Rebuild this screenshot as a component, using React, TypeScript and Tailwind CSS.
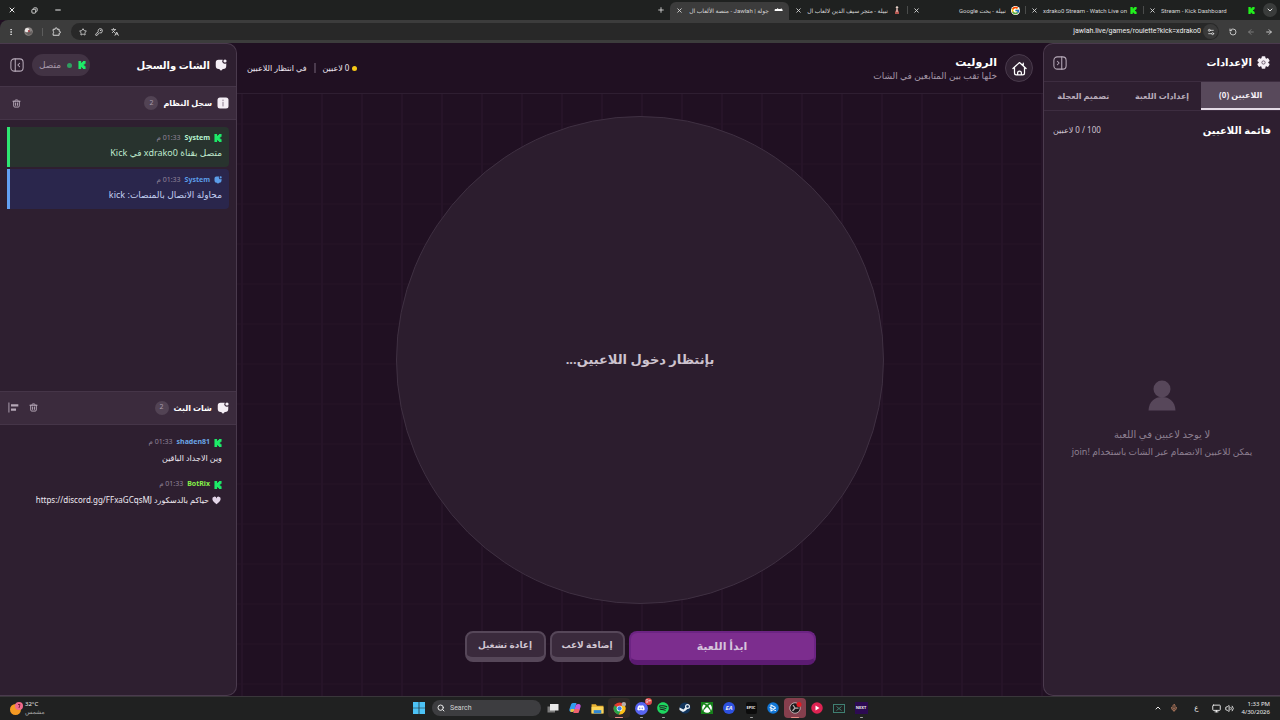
import type { ReactNode } from "react";
import {
  ArrowLeft,
  ArrowRight,
  ChevronDown,
  ChevronUp,
  EllipsisVertical,
  KeyRound,
  Languages,
  Mic,
  Minus,
  Monitor,
  Plus,
  RotateCcw,
  Search,
  Settings2,
  Star,
  Volume2,
  X,
} from "lucide-react";
import { FaDiscord, FaSpotify, FaXbox } from "react-icons/fa";
import { FcGoogle } from "react-icons/fc";

function KickLogo({ className }: { className: string }) {
  return (
    <svg viewBox="0 0 24 24" className={className} fill="currentColor" aria-hidden="true">
      <path d="M1.333 0h8v5.333H12V2.667h2.667V0h8v8H20v2.667h-2.667v2.666H20V16h2.667v8h-8v-2.667H12v-2.666H9.333V24h-8Z" />
    </svg>
  );
}

function ChatIcon({ className }: { className: string }) {
  return (
    <svg viewBox="0 0 24 24" className={className} fill="currentColor" aria-hidden="true">
      <path d="M7 1.500h8.500a5 5 0 0 0 7 7V14a6 6 0 0 1-6 6h-.8L12 23.500 8.300 20H7.500a6 6 0 0 1-6-6V7a5.500 5.500 0 0 1 5.500-5.500Z" />
      <circle cx="20" cy="4" r="3.200" />
    </svg>
  );
}

function InfoIcon({ className }: { className: string }) {
  return (
    <svg viewBox="0 0 24 24" className={className} aria-hidden="true">
      <rect x="1" y="1" width="22" height="22" rx="5" fill="#f4eef5" />
      <path d="M12 10.500v7.500" stroke="#8d7f90" strokeWidth="2" strokeLinecap="round" />
      <circle cx="12" cy="6.500" r="1.400" fill="#8d7f90" />
    </svg>
  );
}

function TrashIcon({ className }: { className: string }) {
  return (
    <svg viewBox="0 0 24 24" className={className} fill="none" stroke="currentColor" strokeWidth="2.600" strokeLinejoin="round" strokeLinecap="round" aria-hidden="true">
      <path d="M2.500 6h19M8 6V4.500A2 2 0 0 1 10 2.500h4A2 2 0 0 1 16 4.500V6M4.500 6v12.500a3 3 0 0 0 3 3h9a3 3 0 0 0 3-3V6M9.500 10.500v6.500M14.500 10.500v6.500" />
    </svg>
  );
}

function AlignIcon({ className }: { className: string }) {
  return (
    <svg viewBox="0 0 24 24" className={className} fill="currentColor" aria-hidden="true">
      <path d="M1 1h2v22H1zM6.500 5h16v5h-16zM6.500 14h11v5h-11z" />
    </svg>
  );
}

function PanelIcon({ className, flipped }: { className: string; flipped?: boolean }) {
  return (
    <svg viewBox="0 0 24 24" className={className} fill="none" stroke="currentColor" strokeWidth="1.800" strokeLinecap="round" strokeLinejoin="round" aria-hidden="true">
      <rect x="1.500" y="1.500" width="21" height="21" rx="6" />
      {flipped ? <path d="M15 1.500v21M7.500 9l3 3-3 3" /> : <path d="M9 1.500v21M16.500 9l-3 3 3 3" />}
    </svg>
  );
}

function GearIcon({ className }: { className: string }) {
  return (
    <svg viewBox="0 0 24 24" className={className} aria-hidden="true">
      <g fill="#f6f0f7">
        <circle cx="12" cy="12" r="8.800" />
        <rect x="8.500" y="0.500" width="7" height="23" rx="1.500" />
        <rect x="8.500" y="0.500" width="7" height="23" rx="1.500" transform="rotate(60 12 12)" />
        <rect x="8.500" y="0.500" width="7" height="23" rx="1.500" transform="rotate(120 12 12)" />
      </g>
      <circle cx="12" cy="12" r="3" fill="none" stroke="#6a5a6d" strokeWidth="1.800" />
    </svg>
  );
}

function HomeIcon({ className }: { className: string }) {
  return (
    <svg viewBox="0 0 24 24" className={className} fill="none" stroke="currentColor" strokeWidth="2" strokeLinecap="round" strokeLinejoin="round" aria-hidden="true">
      <path d="M1.500 12 12 2.500 22.500 12M18 7V3.500M4 10v9a3 3 0 0 0 3 3h10a3 3 0 0 0 3-3v-9M9 22v-3a3 3 0 0 1 6 0v3" />
    </svg>
  );
}

function PersonIcon({ className }: { className: string }) {
  return (
    <svg viewBox="0 0 28 30" className={className} fill="currentColor" aria-hidden="true">
      <circle cx="14" cy="8.500" r="8.500" />
      <path d="M0.500 30C1 21 6.500 16.500 14 16.500S27 21 27.500 30Z" />
    </svg>
  );
}

function RestoreIcon({ className }: { className: string }) {
  return (
    <svg viewBox="0 0 24 24" className={className} fill="none" stroke="currentColor" strokeWidth="3" aria-hidden="true">
      <rect x="3" y="8" width="13" height="13" rx="3" />
      <path d="M8 5.500A3 3 0 0 1 11 3h7a3 3 0 0 1 3 3v7a3 3 0 0 1-2.500 3" />
    </svg>
  );
}

function ExtensionIcon({ className }: { className: string }) {
  return (
    <svg viewBox="0 0 24 24" className={className} fill="none" stroke="currentColor" strokeWidth="2.600" strokeLinejoin="round" aria-hidden="true">
      <path d="M3 6h5.500V4.500a2.500 2.500 0 0 1 5 0V6H19v5.500h1a2.500 2.500 0 0 1 0 5h-1V22H3v-5.500a2.800 2.800 0 0 0 0-5Z" />
    </svg>
  );
}

function BrowserTab({ icon, title, ltr, active }: { icon: ReactNode; title: string; ltr?: boolean; active?: boolean }) {
  return (
    <div
      className={
        active
          ? "flex h-[18px] w-[119px] items-center gap-1 rounded-t-md bg-[#3c3c3c] pr-[6px] pl-1 pb-[2px]"
          : "flex h-[18px] w-[119px] items-center gap-1 pr-[6px] pl-1"
      }
    >
      <span className="flex w-[10px] shrink-0 justify-center">{icon}</span>
      <a
        href="#tab"
        dir={ltr ? "ltr" : "rtl"}
        className="min-w-0 flex-1 font-['Roboto','DejaVu_Sans',sans-serif] text-[6px] whitespace-nowrap text-[#d6d6d6]"
      >
        {title}
      </a>
      <button aria-label="إغلاق علامة التبويب" className="flex w-[10px] shrink-0 justify-center text-[#dcdcdc]">
        <X className="size-[7px]" strokeWidth={3} />
      </button>
    </div>
  );
}

function Divider() {
  return <span className="-mx-px h-2 w-px bg-[#4a4c4b]" />;
}

function TabStrip() {
  return (
    <div className="flex h-5 shrink-0 items-end justify-between bg-[#1f2120] pr-[3px]">
      <div className="flex items-end">
        <div className="flex h-5 items-center">
          <button aria-label="البحث في علامات التبويب" className="flex size-[14px] items-center justify-center rounded-full bg-[#3a3c3b]">
            <ChevronDown className="size-2 text-[#e4e4e4]" strokeWidth={3} />
          </button>
          <span className="w-px" />
          <BrowserTab ltr title="Stream - Kick Dashboard" icon={<KickLogo className="size-[7px] text-[#22f01d]" />} />
          <Divider />
          <BrowserTab ltr title="xdrako0 Stream - Watch Live on" icon={<KickLogo className="size-[7px] text-[#22f01d]" />} />
          <Divider />
          <BrowserTab title="نبيلة - بحث Google" icon={<FcGoogle className="size-[9px] rounded-full bg-white" />} />
          <Divider />
          <BrowserTab
            title="نبيلة - متجر سيف الدين لالعاب ال"
            icon={
              <svg viewBox="0 0 10 16" className="h-2 w-[6px]" aria-hidden="true">
                <circle cx="5" cy="3" r="2.500" fill="#e7d3c9" />
                <path d="M5 5 9 12v4H1v-4Z" fill="#b4564f" />
                <path d="M4 6h2v6H4z" fill="#f0e4df" />
              </svg>
            }
          />
        </div>
        <BrowserTab
          active
          title="جولة | Jawlah - منصة الألعاب ال"
          icon={
            <svg viewBox="0 0 18 8" className="h-1 w-[9px] text-white" fill="currentColor" aria-hidden="true">
              <path d="M1 5c0-2 1-3 3-3h2l1-2 2 2h4l2-2v2c2 0 3 2 2 4H2Z" />
            </svg>
          }
        />
        <button aria-label="علامة تبويب جديدة" className="flex h-5 w-[18px] items-center justify-center">
          <Plus className="size-2 text-[#e0e0e0]" strokeWidth={2.500} />
        </button>
      </div>
      <div className="flex h-5 items-center text-[#ececec]">
        <button aria-label="تصغير" className="flex w-[23px] justify-center">
          <Minus className="size-2" strokeWidth={3} />
        </button>
        <button aria-label="استعادة" className="flex w-[23px] justify-center">
          <RestoreIcon className="size-[7px]" />
        </button>
        <button aria-label="إغلاق" className="flex w-[23px] justify-center">
          <X className="size-2" strokeWidth={3} />
        </button>
      </div>
    </div>
  );
}

function Toolbar() {
  return (
    <div className="flex h-[23px] shrink-0 items-center gap-[10px] rounded-tl-lg bg-[#3c3c3c] px-[7px] text-[#dcdcdc]">
      <button aria-label="السابق" className="shrink-0">
        <ArrowRight className="size-2" strokeWidth={2.500} />
      </button>
      <button aria-label="التالي" className="shrink-0 text-[#858585]">
        <ArrowLeft className="size-2" strokeWidth={2.500} />
      </button>
      <button aria-label="إعادة التحميل" className="shrink-0">
        <RotateCcw className="size-2" strokeWidth={2.500} />
      </button>
      <div className="flex h-[17px] min-w-0 flex-1 items-center gap-2 rounded-full bg-[#282828] pr-px pl-2">
        <div className="flex min-w-0 flex-1 items-center gap-[2px]">
          <button aria-label="معلومات الموقع" className="flex size-[15px] shrink-0 items-center justify-center rounded-full bg-[#3a3a3a]">
            <Settings2 className="size-2" strokeWidth={2.500} />
          </button>
          <input
            aria-label="العنوان"
            dir="ltr"
            defaultValue="jawlah.live/games/roulette?kick=xdrako0"
            className="min-w-0 flex-1 bg-transparent text-right font-['Roboto',sans-serif] text-[7px] text-[#eeeeee] outline-none"
          />
        </div>
        <button aria-label="ترجمة">
          <Languages className="size-2" strokeWidth={2.500} />
        </button>
        <button aria-label="كلمات المرور">
          <KeyRound className="size-2" strokeWidth={2.500} />
        </button>
        <button aria-label="إشارة مرجعية">
          <Star className="size-2" strokeWidth={2.500} />
        </button>
      </div>
      <div className="flex shrink-0 items-center gap-[9px]">
        <button aria-label="الإضافات">
          <ExtensionIcon className="size-[9px]" />
        </button>
        <span className="h-2 w-px bg-[#5c5c5c]" />
        <button aria-label="الملف الشخصي">
          <svg viewBox="0 0 20 20" className="size-[9px]" aria-hidden="true">
            <circle cx="10" cy="10" r="9.500" fill="#8b8584" />
            <circle cx="7" cy="7" r="5" fill="#ece8e6" />
            <circle cx="11" cy="9" r="2.500" fill="#a33f45" />
            <path d="M2 12 9 18 17 16 18 9 12 11Z" fill="#55504f" opacity="0.700" />
          </svg>
        </button>
        <button aria-label="القائمة">
          <EllipsisVertical className="size-2" strokeWidth={3} />
        </button>
      </div>
    </div>
  );
}

function SettingsPanel() {
  return (
    <aside className="flex w-[237px] shrink-0 flex-col rounded-l-[10px] border border-r-0 border-[#4a3a4d] bg-[#2e1f30]">
      <div className="flex h-[38px] shrink-0 items-center justify-between border-b border-[#3d2d40] pr-[10px] pl-[9px]">
        <h2 className="flex items-center gap-[5px] text-[10px] font-bold">
          <GearIcon className="size-[13px]" />
          الإعدادات
        </h2>
        <button aria-label="طي الإعدادات" className="text-[#b6a9b8]">
          <PanelIcon className="size-[14px]" flipped />
        </button>
      </div>
      <nav className="grid h-[29px] shrink-0 grid-cols-3 border-b border-[#3d2d40] text-[8px] font-bold text-[#b9adbb]">
        <button className="border-b-2 border-[#e4dbe6] bg-[#58495b] text-[#f4eff5]">اللاعبين (0)</button>
        <button>إعدادات اللعبة</button>
        <button>تصميم العجلة</button>
      </nav>
      <div className="flex h-[38px] shrink-0 items-center justify-between px-[9px]">
        <h3 className="text-[10px] font-bold">قائمة اللاعبين</h3>
        <span className="text-[8px] text-[#cfc5d1]">100 / 0 لاعبين</span>
      </div>
      <div className="flex flex-1 flex-col items-center justify-center pb-[6px] text-[#8d7f90]">
        <PersonIcon className="h-[31px] w-[28px] text-[#57475a]" />
        <p className="mt-4 text-[10px] leading-[14px]">لا يوجد لاعبين في اللعبة</p>
        <p className="mt-1 text-[9px] leading-[14px] whitespace-nowrap">يمكن للاعبين الانضمام عبر الشات باستخدام !join</p>
      </div>
    </aside>
  );
}

type ChatLine = { name: string; nameClass: string; icon: ReactNode; body: ReactNode; cardClass: string };

const kickBadge = <KickLogo className="size-2 text-[#1dea68]" />;

const systemLog: ChatLine[] = [
  {
    name: "System",
    nameClass: "font-bold text-[#b9f5d2]",
    icon: kickBadge,
    body: "متصل بقناة xdrako0 في Kick",
    cardClass: "rounded-r border-l-[3px] border-[#2fe673] bg-[#28332e] text-[9px] text-[#bfe9cd]",
  },
  {
    name: "System",
    nameClass: "font-bold text-[#5b9de8]",
    icon: <ChatIcon className="size-2 text-[#5b9de8]" />,
    body: "محاولة الاتصال بالمنصات: kick",
    cardClass: "rounded-r border-l-[3px] border-[#62a0f2] bg-[#2a264c] text-[9px] text-[#c3d0f2]",
  },
];

const streamChat: ChatLine[] = [
  {
    name: "shaden81",
    nameClass: "font-bold text-[#6ba6e6]",
    icon: kickBadge,
    body: "وين الاجداد الباقين",
    cardClass: "border-l-[3px] border-transparent text-[8px] text-[#f0eaf2]",
  },
  {
    name: "BotRix",
    nameClass: "font-bold text-[#86f04a]",
    icon: kickBadge,
    body: (
      <>
        <svg viewBox="0 0 24 22" className="mx-px ml-[3px] inline-block size-[9px] align-middle" fill="#e3d5e8" aria-label="قلب">
          <path d="M12 21C5 15 1 11.500 1 7a5.500 5.500 0 0 1 11-1.500A5.500 5.500 0 0 1 23 7c0 4.500-4 8-11 14Z" />
        </svg>
        حياكم بالدسكورد https://discord.gg/FFxaGCqsMJ
      </>
    ),
    cardClass: "border-l-[3px] border-transparent text-[8px] text-[#f0eaf2]",
  },
];

function ChatList({ lines }: { lines: ChatLine[] }) {
  return (
    <ul className="flex flex-1 flex-col gap-[2px] px-[7px] py-[7px]">
      {lines.map((line) => (
        <li key={line.nameClass} className={`h-10 px-[7px] pt-1 ${line.cardClass}`}>
          <div className="flex h-[14px] items-center gap-1 text-[7px]">
            {line.icon}
            <span className={line.nameClass}>{line.name}</span>
            <time className="text-[#92859a]">01:33 م</time>
          </div>
          <p className="leading-[15px] whitespace-nowrap">{line.body}</p>
        </li>
      ))}
    </ul>
  );
}

function SectionBar({ icon, title, children }: { icon: ReactNode; title: string; children: ReactNode }) {
  return (
    <div className="flex h-[34px] shrink-0 items-center justify-between border-y border-[#453548] bg-[#3b2b3d] pr-[7px] pl-2">
      <h3 className="flex items-center gap-[5px] text-[8px] font-bold">
        {icon}
        {title}
        <span className="flex size-[14px] items-center justify-center rounded-full bg-[#524354] text-[7px] font-normal text-[#a99bac]">
          2
        </span>
      </h3>
      <div className="flex items-center gap-[10px] text-[#b5a8b7]">{children}</div>
    </div>
  );
}

function ChatPanel() {
  return (
    <aside className="flex w-[237px] shrink-0 flex-col rounded-r-[10px] border border-l-0 border-[#4a3a4d] bg-[#2e1f30]">
      <div className="flex h-[42px] shrink-0 items-center justify-between pr-[9px] pl-[10px]">
        <h2 className="flex items-center gap-[5px] text-[10px] font-bold">
          <ChatIcon className="size-3 text-[#f4eef5]" />
          الشات والسجل
        </h2>
        <div className="flex items-center gap-2">
          <span className="flex h-[22px] items-center gap-[6px] rounded-full bg-[#423344] pr-1 pl-[7px] text-[9px] text-[#a698a9]">
            <KickLogo className="size-2 text-[#1dea68]" />
            <span className="size-[5px] rounded-full bg-[#2f9e60]" />
            متصل
          </span>
          <button aria-label="طي الشات" className="text-[#b6a9b8]">
            <PanelIcon className="size-[14px]" />
          </button>
        </div>
      </div>
      <section className="flex flex-1 flex-col">
        <SectionBar icon={<InfoIcon className="size-3" />} title="سجل النظام">
          <button aria-label="مسح سجل النظام" className="px-1">
            <TrashIcon className="size-[9px]" />
          </button>
        </SectionBar>
        <ChatList lines={systemLog} />
      </section>
      <section className="flex flex-1 flex-col">
        <SectionBar icon={<ChatIcon className="size-3 text-[#f4eef5]" />} title="شات البث">
          <button aria-label="مسح الشات">
            <TrashIcon className="size-[9px]" />
          </button>
          <button aria-label="محاذاة الشات">
            <AlignIcon className="size-[11px]" />
          </button>
        </SectionBar>
        <ChatList lines={streamChat} />
      </section>
    </aside>
  );
}

function GameStage() {
  return (
    <main className="flex min-w-0 flex-1 flex-col bg-[#201022]">
      <header className="flex h-[51px] shrink-0 items-center justify-between border-b border-[#2e1e31] px-[10px]">
        <div className="flex items-center gap-2">
          <a
            href="#home"
            aria-label="الرئيسية"
            className="flex size-7 items-center justify-center rounded-full border border-[#493a4c] bg-[#302132]"
          >
            <HomeIcon className="size-[15px]" />
          </a>
          <div>
            <h1 className="text-[11px] leading-[15px] font-bold">الروليت</h1>
            <p className="text-[9px] leading-[14px] text-[#a497a7]">خلها تقب بين المتابعين في الشات</p>
          </div>
        </div>
        <div className="flex items-center gap-[7px] text-[8px] text-[#eee6f0]">
          <span className="flex items-center gap-[3px]">
            <span className="size-[5px] rounded-full bg-[#f5c816]" />0 لاعبين
          </span>
          <span className="h-[10px] w-[2px] bg-[#4a3a4d]" />
          <span>في انتظار اللاعبين</span>
        </div>
      </header>
      <div className="flex flex-1 flex-col items-center bg-[linear-gradient(90deg,#261428_2px,transparent_2px),linear-gradient(#231224_2px,transparent_2px)] bg-size-[40px_40px] bg-position-[4px_29px] px-4 pt-[22px]">
        <div className="flex aspect-square w-[488px] max-w-full items-center justify-center rounded-full border border-[#3f3042] bg-[#2c1d2e]">
          <p className="text-[13px] font-bold text-[#cdc3cf]">بإنتظار دخول اللاعبين...</p>
        </div>
        <div className="mt-[27px] flex items-start gap-1 font-bold">
          <button className="h-[34px] w-[187px] rounded-lg border-2 border-b-[5px] border-[#6c2483] border-b-[#5c1b72] bg-[#7c2d8e] text-[11px] text-[#d6c4dc]">
            ابدأ اللعبة
          </button>
          <button className="h-[31px] w-[75px] rounded-lg border-2 border-b-[5px] border-[#564759] bg-[#3a2a3c] text-[9px] text-[#cfc5d1]">
            إضافة لاعب
          </button>
          <button className="h-[31px] w-[81px] rounded-lg border-2 border-b-[5px] border-[#564759] bg-[#3a2a3c] text-[9px] text-[#cfc5d1]">
            إعادة تشغيل
          </button>
        </div>
      </div>
    </main>
  );
}

function TaskItem({ label, running, lit, children }: { label: string; running?: boolean; lit?: string; children: ReactNode }) {
  return (
    <button
      aria-label={label}
      className={`relative flex h-5 w-[22px] items-center justify-center rounded-sm ${lit ?? ""}`}
    >
      {children}
      {lit ? <span className="absolute bottom-0 h-px w-2 rounded-full bg-[#e98c84]" /> : null}
      {running ? <span className="absolute bottom-0 h-px w-[3px] rounded-full bg-[#a0a0a0]" /> : null}
    </button>
  );
}

function Taskbar() {
  return (
    <footer dir="ltr" className="grid h-6 shrink-0 grid-cols-[1fr_auto_1fr] items-center border-t border-[#39363a] bg-[#202121] px-[10px] pb-px text-[#ececec]">
      <div className="flex items-center gap-[2px]">
        <svg viewBox="0 0 26 26" className="size-[13px]" aria-hidden="true">
          <circle cx="11" cy="15" r="11" fill="#f59a23" />
          <circle cx="18" cy="8" r="8" fill="#f06a8c" />
          <path d="M16 5h4l-2 7" stroke="#7a1f3c" strokeWidth="2" fill="none" />
        </svg>
        <div className="text-[6px] leading-[8px]">
          <p>32°C</p>
          <p className="text-[#a8a8a8]">مشمس</p>
        </div>
      </div>

      <div className="flex items-center">
        <TaskItem label="Start">
          <svg viewBox="0 0 24 24" className="size-3" fill="#4cc2f5" aria-hidden="true">
            <path d="M0 0h11.300v11.300H0zM12.700 0H24v11.300H12.700zM0 12.700h11.300V24H0zM12.700 12.700H24V24H12.700z" />
          </svg>
        </TaskItem>
        <label className="mr-px ml-[2px] flex h-4 w-[109px] items-center gap-[5px] rounded-full bg-[#3d3d40] pl-[5px]">
          <Search className="size-2" strokeWidth={3} />
          <input placeholder="Search" aria-label="Search" className="w-20 bg-transparent font-['Roboto',sans-serif] text-[7px] outline-none placeholder:text-[#d2d2d2]" />
        </label>
        <TaskItem label="Task view">
          <svg viewBox="0 0 24 24" className="size-3" aria-hidden="true">
            <rect x="1" y="9" width="15" height="12" fill="#7c7c7c" />
            <rect x="6" y="4" width="17" height="13" fill="#e9e9e9" />
          </svg>
        </TaskItem>
        <TaskItem label="Copilot">
          <svg viewBox="0 0 24 24" className="size-3" aria-hidden="true">
            <path d="M8 2h7l-4 14a5 5 0 0 1-5 4H5c-4 0-5-3-4-6l3-9a4 4 0 0 1 4-3Z" fill="#2f9df0" />
            <path d="M4 14h7l-1 4a4 4 0 0 1-4 2H5c-3 0-3-3-1-6Z" fill="#e9c13f" />
            <path d="M16 22H9l4-14a5 5 0 0 1 5-4h1c4 0 5 3 4 6l-3 9a4 4 0 0 1-4 3Z" fill="#c45ad8" />
            <path d="M16 22H9l2-8h10l-1 5a4 4 0 0 1-4 3Z" fill="#f0616b" />
          </svg>
        </TaskItem>
        <TaskItem label="File Explorer">
          <svg viewBox="0 0 24 24" className="size-[13px]" aria-hidden="true">
            <path d="M1 4h8l2 3h12v14H1Z" fill="#e8b132" />
            <path d="M1 9h22v12H1Z" fill="#fbd55a" />
            <path d="M5 21v-6h14v6Z" fill="#2e86d3" />
          </svg>
        </TaskItem>
        <TaskItem label="Chrome" lit="bg-[#302827]">
          <svg viewBox="0 0 24 24" className="size-[13px]" aria-hidden="true">
            <circle cx="12" cy="12" r="11" fill="#e33b2e" />
            <path d="M12 12 2.500 6.500A11 11 0 0 0 11 23l5-9Z" fill="#27a348" />
            <path d="M12 12h4l-5 11A11 11 0 0 0 22 7H12Z" fill="#fbc116" />
            <circle cx="12" cy="12" r="5.200" fill="#fff" />
            <circle cx="12" cy="12" r="4" fill="#3d7fe8" />
            <circle cx="20" cy="4" r="4" fill="#b9aeaa" />
          </svg>
        </TaskItem>
        <TaskItem label="Discord" running>
          <span className="flex size-[13px] items-center justify-center rounded-full bg-[#5865f2]">
            <FaDiscord className="size-2 text-white" />
          </span>
          <span className="absolute top-0 right-0 flex size-[7px] items-center justify-center rounded-full bg-[#e2484d] text-[5px] leading-none">
            9+
          </span>
        </TaskItem>
        <TaskItem label="Spotify" running>
          <FaSpotify className="size-3 text-[#1ed760]" />
        </TaskItem>
        <TaskItem label="Steam">
          <svg viewBox="0 0 24 24" className="size-3" aria-hidden="true">
            <circle cx="12" cy="12" r="11" fill="#12355c" />
            <path d="M1 11 9 15l6-7 3 5-6 5-4 2-7-4Z" fill="#e6edf3" />
            <circle cx="17" cy="9" r="5" fill="#e6edf3" />
            <circle cx="17" cy="9" r="2.500" fill="#12355c" />
          </svg>
        </TaskItem>
        <TaskItem label="Xbox">
          <span className="flex size-3 items-center justify-center bg-[#16811a]">
            <FaXbox className="size-[10px] text-white" />
          </span>
        </TaskItem>
        <TaskItem label="EA">
          <span className="flex size-3 items-center justify-center rounded-full bg-[#2d51e0] text-[6px] font-bold italic">EA</span>
        </TaskItem>
        <TaskItem label="Epic Games" running>
          <span className="flex h-3 w-[11px] items-center justify-center rounded-[2px] bg-[#0b0b0b] text-[4px] font-bold">EPIC</span>
        </TaskItem>
        <TaskItem label="Battle.net">
          <svg viewBox="0 0 24 24" className="size-3" fill="none" aria-hidden="true">
            <circle cx="12" cy="12" r="11.500" fill="#1277d6" />
            <path d="M8 18V6l8 4.500M6 11l11 6M8 18l9-6" stroke="#e8f4ff" strokeWidth="2.200" strokeLinejoin="round" strokeLinecap="round" />
          </svg>
        </TaskItem>
        <TaskItem label="OBS Studio" lit="bg-[#853f4d]">
          <svg viewBox="0 0 26 24" className="h-3 w-[13px]" aria-hidden="true">
            <circle cx="12" cy="12" r="10.500" fill="#1c1a1b" stroke="#d8d0d2" strokeWidth="1.500" />
            <path d="M12 12 8 6M12 12h7M12 12l-5 6" stroke="#b9b0b2" strokeWidth="2.500" />
            <circle cx="20" cy="5" r="5" fill="#e31b23" />
          </svg>
        </TaskItem>
        <TaskItem label="Media player">
          <svg viewBox="0 0 24 24" className="size-3" aria-hidden="true">
            <circle cx="12" cy="12" r="11.500" fill="#de2352" />
            <path d="m9 7 8 5-8 5Z" fill="#fff" />
          </svg>
        </TaskItem>
        <TaskItem label="Display tool">
          <svg viewBox="0 0 24 18" className="h-[9px] w-3" fill="none" stroke="#3f7f72" strokeWidth="2" aria-hidden="true">
            <rect x="1" y="1" width="22" height="16" />
            <path d="m7 5 10 8M17 5 7 13" />
          </svg>
        </TaskItem>
        <TaskItem label="Next" running>
          <span className="flex h-3 w-[13px] items-center justify-center bg-[#2c0a52] text-[4px] font-bold">NEXT</span>
        </TaskItem>
      </div>

      <div className="flex items-center justify-end">
        <ChevronUp className="mr-2 size-2" strokeWidth={3} />
        <Mic className="mr-4 size-2 text-[#c98767]" strokeWidth={2.500} />
        <span className="mr-[13px] text-[7px]">ع</span>
        <Monitor className="mr-1 size-[9px]" strokeWidth={2.500} />
        <Volume2 className="mr-2 size-[9px]" strokeWidth={2.500} />
        <div className="text-right text-[6px] leading-[8px]">
          <p>1:33 PM</p>
          <p>4/30/2026</p>
        </div>
      </div>
    </footer>
  );
}

export default function App() {
  return (
    <div
      dir="rtl"
      className="flex min-h-screen flex-col bg-[#201022] font-['Noto_Sans','DejaVu_Sans',sans-serif] text-white"
    >
      <TabStrip />
      <Toolbar />
      <div className="flex flex-1">
        <SettingsPanel />
        <GameStage />
        <ChatPanel />
      </div>
      <Taskbar />
    </div>
  );
}
